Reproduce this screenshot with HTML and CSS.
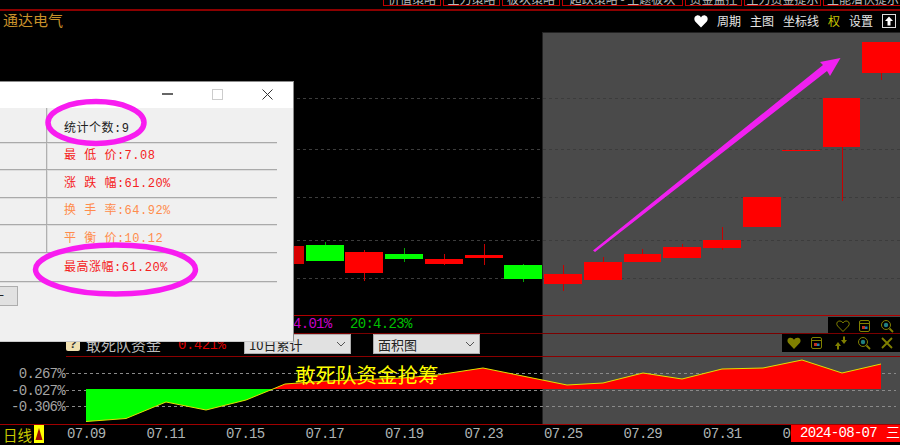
FILE: index.html
```html
<!DOCTYPE html>
<html lang="zh-CN">
<head>
<meta charset="utf-8">
<title>通达电气</title>
<link rel="stylesheet" href="styles.css">
</head>
<body>
<svg class="defs" width="0" height="0">
  <symbol id="i-heart" viewBox="0 0 14 14"><path class="ol" d="M7 12.500 1.600 7C.2 5.400.6 2.600 2.800 2.100 4.500 1.700 6.200 2.500 7 4c.8-1.500 2.500-2.300 4.200-1.900 2.200.5 2.600 3.300 1.200 4.900z"/></symbol>
  <symbol id="i-heart-fill" viewBox="0 0 14 14"><path class="of" d="M7 13 1.300 7C-.2 5.200.3 2.300 2.700 1.800 4.400 1.400 6.200 2.200 7 3.800c.8-1.600 2.600-2.400 4.300-2 2.400.5 2.900 3.400 1.400 5.200z"/></symbol>
  <symbol id="i-cal" viewBox="0 0 14 14"><rect class="ol" x="1.500" y="1.500" width="10" height="11" rx="1.500"/><path class="ol" d="M1.500 4.500h10"/><rect class="cr" x="4" y="7" width="3" height="3"/><rect class="cb" x="7" y="7.500" width="2.500" height="2.500"/></symbol>
  <symbol id="i-mag" viewBox="0 0 14 14"><circle class="ol" cx="6" cy="6" r="4.500"/><circle class="ct" cx="6" cy="6" r="2.200"/><path class="ot" d="M9.500 9.500 13 13"/></symbol>
  <symbol id="i-arrows" viewBox="0 0 14 14"><path class="of" d="M4 6 7 10H5V13.500H3V10H1zM10 8 7 4h2V.5h2V4h2z"/></symbol>
  <symbol id="i-x" viewBox="0 0 14 14"><path class="ot" d="M2 2 12 12M12 2 2 12"/></symbol>
</svg>

<div class="app">
  <div class="selection"></div>

  <nav class="tabs">
    <span class="tab w58">价值策略</span>
    <span class="tab w57">主力策略</span>
    <span class="tab w58">板块策略</span>
    <span class="tab w121">超跌策略 - 主题板块</span>
    <span class="tab w57">资金监控</span>
    <span class="tab w77">主力资金提示</span>
    <span class="tab grow">主能潜伏提示</span>
  </nav>

  <header class="head">
    <span class="stock">通达电气</span>
    <div class="tools">
      <svg class="heart-top" viewBox="0 0 14 14"><path d="M7 13.500 1.200 7.500C-.4 5.500.2 2 2.900 1.400 4.600 1 6.200 1.900 7 3.400 7.800 1.900 9.400 1 11.100 1.400 13.800 2 14.400 5.500 12.800 7.500z"/></svg>
      <span>周期</span>
      <span>主图</span>
      <span>坐标线</span>
      <span class="on">权</span>
      <span>设置</span>
      <svg class="up" viewBox="0 0 14 14"><rect x=".5" y=".5" width="13" height="13"/><path d="M7 2.500 11 7H8.500v4.500h-3V7H3z"/></svg>
    </div>
  </header>

  <section class="main">
    <svg class="canvas" viewBox="0 33 900 282">
      <g class="grid">
        <path d="M297 98.500H900M297 149.500H900M297 197.500H900"/>
        <path d="M297 240.500H900M297 278.500H900"/>
      </g>
      <g class="wick-g">
        <path d="M325.500 242V246M404.500 248V262M523.500 264V282"/>
      </g>
      <g class="wick-r">
        <path d="M364.500 250V281M444.500 254V265M484.500 244V265M563.500 265V291M603.500 257V263M642.500 249V255M682.500 244V248M722.500 227V250M842.500 147V201M881.500 73V80"/>
      </g>
      <rect class="red dim" x="294" y="246" width="10" height="18"/>
      <rect class="grn" x="306" y="245" width="38" height="16"/>
      <rect class="red" x="345" y="252" width="38" height="21"/>
      <rect class="grn" x="385" y="254" width="38" height="5"/>
      <rect class="red" x="425" y="259" width="38" height="5"/>
      <rect class="red" x="465" y="255" width="38" height="3"/>
      <rect class="grn" x="504" y="265" width="38" height="14"/>
      <rect class="red" x="544" y="274" width="38" height="10"/>
      <rect class="red" x="584" y="262" width="38" height="18"/>
      <rect class="red" x="624" y="254" width="37" height="8"/>
      <rect class="red" x="663" y="247" width="38" height="11"/>
      <rect class="red" x="703" y="240" width="38" height="8"/>
      <rect class="red" x="743" y="197" width="38" height="30"/>
      <rect class="red" x="782" y="150" width="38" height="1"/>
      <rect class="red" x="823" y="98" width="37" height="49"/>
      <rect class="red" x="862" y="42" width="38" height="31"/>
    </svg>
  </section>

  <section class="legend">
    <span class="ma10">4.01%</span>
    <span class="ma20">20:4.23%</span>
    <div class="toolbar small">
      <svg class="ic"><use href="#i-heart"/></svg>
      <svg class="ic"><use href="#i-cal"/></svg>
      <svg class="ic"><use href="#i-mag"/></svg>
    </div>
  </section>

  <section class="ind-head">
    <span class="help">?</span>
    <span class="ind-name">敢死队资金</span>
    <span class="ind-val">0.421%</span>
    <div class="select first">10日累计<svg class="chev" viewBox="0 0 10 6"><path d="M1 1 5 5 9 1"/></svg></div>
    <div class="select">面积图<svg class="chev" viewBox="0 0 10 6"><path d="M1 1 5 5 9 1"/></svg></div>
    <div class="toolbar">
      <svg class="ic"><use href="#i-heart-fill"/></svg>
      <svg class="ic"><use href="#i-cal"/></svg>
      <svg class="ic"><use href="#i-arrows"/></svg>
      <svg class="ic"><use href="#i-mag"/></svg>
      <svg class="ic"><use href="#i-x"/></svg>
    </div>
  </section>

  <section class="ind-plot">
    <div class="ind-rule"></div>
    <svg class="canvas" viewBox="0 357 900 67">
      <text class="tick" x="65" y="378">0.267%</text>
      <text class="tick" x="65" y="395">-0.027%</text>
      <text class="tick" x="65" y="411">-0.306%</text>
      <path class="plot-grid" d="M66 373.500H896M66 390.500H896M66 406.500H896"/>
      <path class="area-g" d="M86 389V421.500L126 418.500 166 402 206 410 246 400 273 389z"/>
      <path class="area-r" d="M273 389 285 384 326 381 403 378 437 375 483 368 567 385 603 383 643 373 682 379 722 369 763 368 802 360 842 373 881 364V389z"/>
      <path class="area-line" d="M86 421.500 126 418.500 166 402 206 410 246 400 273 389 285 384 326 381 403 378 437 375 483 368 567 385 603 383 643 373 682 379 722 369 763 368 802 360 842 373 881 364"/>
    </svg>
    <div class="caption">敢死队资金抢筹</div>
  </section>

  <footer class="axis">
    <span class="period">日线</span>
    <svg class="mark" viewBox="0 0 10 18"><rect width="10" height="18"/><path d="M5 3 8.500 15H1.500z"/></svg>
    <div class="dates">
      <span>07.09</span><span>07.11</span><span>07.15</span><span>07.17</span><span>07.19</span><span>07.23</span><span>07.25</span><span>07.29</span><span>07.31</span><span>0</span>
    </div>
    <div class="chip"><span>2024-08-07</span><span>三</span></div>
  </footer>

  <div class="dialog">
    <div class="titlebar">
      <span class="win-min"></span>
      <span class="win-max"></span>
      <svg class="win-x" viewBox="0 0 11 11"><path d="M.5.500 10.500 10.500M10.500.500.500 10.500"/></svg>
    </div>
    <div class="stats">
      <div class="row"><div class="cell"></div><span class="dark">统计个数:9</span></div>
      <div class="row"><div class="cell"></div><span class="rd">最 低 价:7.08</span></div>
      <div class="row"><div class="cell"></div><span class="rd">涨 跌 幅:61.20%</span></div>
      <div class="row"><div class="cell"></div><span class="org">换 手 率:64.92%</span></div>
      <div class="row"><div class="cell"></div><span class="org">平 衡 价:10.12</span></div>
      <div class="row last"><div class="cell"></div><span class="rd">最高涨幅:61.20%</span></div>
    </div>
    <button class="dlg-btn">十</button>
  </div>

  <svg class="marks" viewBox="0 0 900 445">
    <polygon class="arrow" points="593,250.500 823,65 820,62 840.500,58 830,76 827,71 595,252"/>
    <ellipse class="ring" cx="96" cy="122.500" rx="48" ry="21"/>
    <ellipse class="ring" cx="115.500" cy="269.500" rx="80" ry="24.500"/>
  </svg>
</div>
</body>
</html>
```

FILE: styles.css
```css
* { box-sizing: border-box; }
html, body { margin: 0; padding: 0; background: #000; }
.defs { position: absolute; }

.app {
  position: relative;
  width: 900px;
  height: 445px;
  overflow: hidden;
  background: #000;
  display: flex;
  flex-direction: column;
  font-family: "Liberation Mono", "Noto Sans CJK SC", monospace;
  color: #ccc;
}
.selection {
  position: absolute;
  left: 542px;
  top: 32px;
  right: 0;
  height: 392px;
  background: #4a4a4a;
  border-left: 1px solid #222;
  border-top: 1px solid #222;
}
.app > section, .app > footer, .app > header { position: relative; }

/* top tabs */
.tabs {
  display: flex;
  gap: 2px;
  height: 9px;
  padding: 0 0 3px 383px;
  flex: none;
}
.tab {
  display: flex;
  align-items: flex-end;
  justify-content: center;
  flex: none;
  height: 6px;
  overflow: hidden;
  border: 1px solid #c00000;
  border-top: 0;
  font: 12px/12px "Noto Sans CJK SC", sans-serif;
  color: #bbb;
  white-space: nowrap;
}
.w58 { width: 58px; }
.w57 { width: 57px; }
.w121 { width: 121px; }
.w77 { width: 77px; }
.grow { flex: 1 0 auto; justify-content: flex-start; padding-left: 3px; border-right: 0; }

/* header */
.head {
  flex: none;
  height: 24px;
  border-top: 2px solid #8b0000;
  display: flex;
  align-items: center;
  justify-content: space-between;
  padding: 0 4px 3px 3px;
}
.stock {
  margin-top: -2px;
  font: 15px/20px "Noto Sans CJK SC", sans-serif;
  color: #c8912a;
}
.tools {
  display: flex;
  align-items: center;
  gap: 9px;
  font: 12px/14px "Noto Sans CJK SC", sans-serif;
  color: #e6e6e6;
}
.tools .on { color: #c8c800; }
.heart-top { width: 14px; height: 14px; fill: #fff; }
.up { width: 14px; height: 14px; }
.up rect { fill: #000; stroke: #ddd; }
.up path { fill: #fff; }

/* main chart */
.main { flex: none; height: 282px; }
.canvas { display: block; width: 900px; height: 100%; }
.grid path { fill: none; stroke: #3c3c3c; stroke-dasharray: 3 3; }
.wick-g path { fill: none; stroke: #00a800; }
.wick-r path { fill: none; stroke: #c80000; }
.red { fill: #f00; }
.dim { fill: #d80000; }
.grn { fill: #0f0; }

/* legend */
.legend {
  flex: none;
  height: 18px;
  border-top: 1px solid #b00000;
  display: flex;
  align-items: center;
  padding-left: 293px;
  font-size: 14px;
  letter-spacing: -.7px;
  line-height: 17px;
}
.ma10 { color: #c800c8; width: 57px; }
.ma20 { color: #00c000; }
.toolbar {
  position: absolute;
  right: 0;
  top: 1px;
  height: 17px;
  padding: 0 4px 0 5px;
  display: flex;
  align-items: center;
  gap: 9px;
  background: #000;
}
.toolbar.small { width: 72px; justify-content: flex-end; padding-right: 6px; gap: 8px; }
.ic { width: 14px; height: 14px; }
.ol { fill: none; stroke: #808000; stroke-width: 1; }
.ot { fill: none; stroke: #808000; stroke-width: 1.800; }
.of { fill: #808000; }
.cr { fill: #c03020; }
.cb { fill: #2080b0; }
.ct { fill: #208080; }

/* indicator header */
.ind-head {
  flex: none;
  height: 23px;
  border-top: 1px solid #7a0000;
  display: flex;
  align-items: flex-start;
  padding-left: 66px;
}
.help {
  width: 14px;
  height: 14px;
  margin-top: 3px;
  background: #f0e0b0;
  border-radius: 2px;
  color: #333;
  font: bold 12px/14px "Liberation Sans", sans-serif;
  text-align: center;
}
.ind-name {
  margin-left: 6px;
  width: 92px;
  font: 15px/22px "Noto Sans CJK SC", sans-serif;
  color: #bdbdbd;
}
.ind-val {
  width: 66px;
  font-size: 14px;
  line-height: 22px;
  letter-spacing: -.5px;
  color: #dc0000;
}
.select {
  position: relative;
  width: 107px;
  height: 20px;
  padding-left: 4px;
  background: #e1e1e1;
  border: 1px solid #adadad;
  font: 13px/19px "Noto Sans CJK SC", sans-serif;
  color: #222;
}
.select.first { margin-right: 22px; }
.chev {
  position: absolute;
  right: 4px;
  top: 6px;
  width: 10px;
  height: 6px;
  fill: none;
  stroke: #555;
}
.ind-head .toolbar { width: 118px; top: 0; height: 18px; padding: 0 6px 0 5px; justify-content: space-between; gap: 0; }

/* indicator plot */
.ind-plot {
  flex: none;
  height: 68px;
  display: flex;
  flex-direction: column;
}
.ind-rule { flex: none; height: 1px; margin-left: 66px; background: #8b0000; }
.ind-plot .canvas { height: 67px; flex: none; }
.tick { font-size: 14px; letter-spacing: -.7px; fill: #a4a4a4; text-anchor: end; }
.plot-grid { fill: none; stroke: #8a8a8a; stroke-dasharray: 3 3; }
.area-g { fill: #0f0; }
.area-r { fill: #f00; }
.area-line { fill: none; stroke: #e0e000; stroke-width: 1; }
.caption {
  position: absolute;
  left: 295px;
  top: 4px;
  font: 20.500px/28px "Noto Sans CJK SC", sans-serif;
  color: #ff0;
  white-space: nowrap;
}

/* axis */
.axis {
  flex: 1;
  border-top: 1px solid #a00000;
  display: flex;
  align-items: flex-start;
  padding-left: 3px;
}
.period {
  width: 31px;
  font: 14.500px/19px "Noto Sans CJK SC", sans-serif;
  color: #c8c800;
}
.mark { width: 10px; height: 18px; flex: none; }
.mark rect { fill: #ff0; }
.mark path { fill: #a01000; }
.dates {
  display: flex;
  margin-left: 23px;
  font-size: 14px;
  letter-spacing: -.7px;
  line-height: 19px;
  color: #aeb4b4;
}
.dates span { width: 79.500px; flex: none; }
.chip {
  position: absolute;
  right: 0;
  top: 0;
  width: 109px;
  height: 17px;
  padding-left: 9px;
  background: #f00;
  color: #fff;
  display: flex;
  gap: 9px;
  font-size: 14px;
  letter-spacing: -.7px;
  line-height: 17px;
  white-space: nowrap;
}

/* dialog */
.dialog {
  position: absolute;
  left: 0;
  top: 81px;
  width: 294px;
  height: 261px;
  background: #f0f0f0;
  border-top: 1px solid #8c8c8c;
  border-right: 1px solid #8c8c8c;
  border-bottom: 1px solid #c8c8c8;
  font-size: 12px;
}
.titlebar {
  position: relative;
  height: 26px;
  background: #fff;
}
.win-min { position: absolute; left: 162px; top: 11px; width: 11px; height: 2px; background: #666; }
.win-max { position: absolute; left: 212px; top: 7px; width: 11px; height: 11px; border: 1px solid #ccc; }
.win-x { position: absolute; left: 262px; top: 7px; width: 11px; height: 11px; fill: none; stroke: #333; }
.stats {
  display: grid;
  grid-template-rows: 35px 27px 28px 27px 28px 29px;
  width: 277px;
}
.row {
  display: flex;
  align-items: stretch;
  border-bottom: 1px solid #aaa;
  box-shadow: 0 1px 0 #ddd;
}
.cell {
  flex: none;
  width: 47px;
  margin-right: 17px;
  border-right: 1px solid #b0b0b0;
  box-shadow: 1px 0 0 #ddd;
}
.row.last .cell { border-right: 0; box-shadow: none; }
.row span {
  align-self: flex-end;
  padding-bottom: 6px;
  line-height: 14px;
  letter-spacing: .5px;
  white-space: nowrap;
}
.dark { color: #222; }
.rd { color: #f52020; }
.org { color: #ff8c4c; }
.dlg-btn {
  display: block;
  width: 18px;
  height: 20px;
  margin-top: 4px;
  padding: 0;
  background: #e1e1e1;
  border: 1px solid #adadad;
  border-left: 0;
  font: 12px/18px "Noto Sans CJK SC", sans-serif;
  color: #222;
  text-align: left;
  text-indent: -8px;
  overflow: hidden;
}

/* hand-drawn annotations */
.marks {
  position: absolute;
  left: 0;
  top: 0;
  width: 900px;
  height: 445px;
  pointer-events: none;
}
.arrow { fill: #f020f0; }
.ring { fill: none; stroke: #f81cf0; stroke-width: 5.500; }
```
